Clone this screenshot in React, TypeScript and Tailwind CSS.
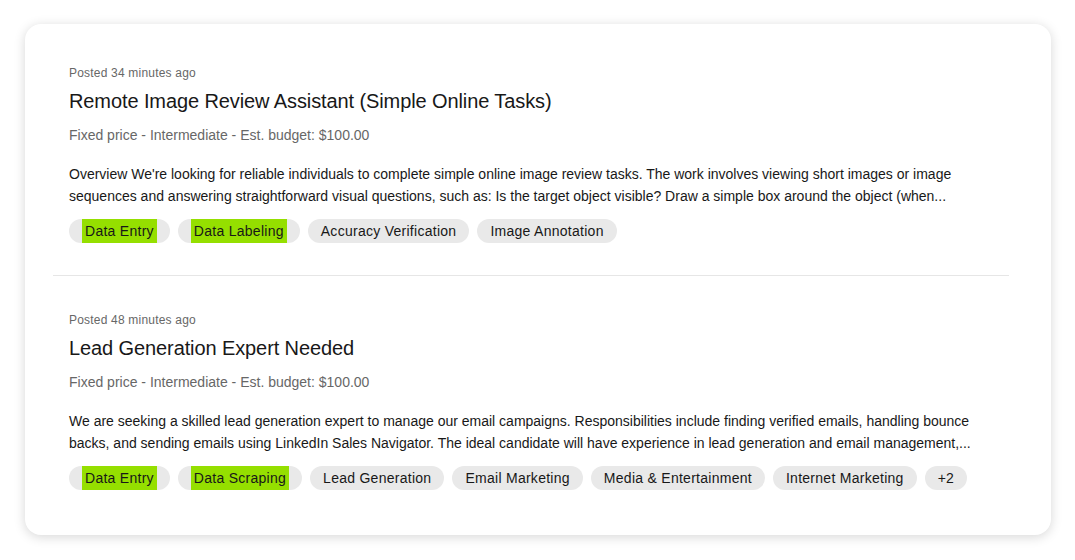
import React from "react";

type Skill = { label: string; hl?: boolean };
type Job = {
  posted: string;
  title: string;
  meta: string;
  desc: string[];
  skills: Skill[];
};

const jobs: Job[] = [
  {
    posted: "Posted 34 minutes ago",
    title: "Remote Image Review Assistant (Simple Online Tasks)",
    meta: "Fixed price - Intermediate - Est. budget: $100.00",
    desc: [
      "Overview We're looking for reliable individuals to complete simple online image review tasks. The work involves viewing short images or image",
      "sequences and answering straightforward visual questions, such as: Is the target object visible? Draw a simple box around the object (when...",
    ],
    skills: [
      { label: "Data Entry", hl: true },
      { label: "Data Labeling", hl: true },
      { label: "Accuracy Verification" },
      { label: "Image Annotation" },
    ],
  },
  {
    posted: "Posted 48 minutes ago",
    title: "Lead Generation Expert Needed",
    meta: "Fixed price - Intermediate - Est. budget: $100.00",
    desc: [
      "We are seeking a skilled lead generation expert to manage our email campaigns. Responsibilities include finding verified emails, handling bounce",
      "backs, and sending emails using LinkedIn Sales Navigator. The ideal candidate will have experience in lead generation and email management,...",
    ],
    skills: [
      { label: "Data Entry", hl: true },
      { label: "Data Scraping", hl: true },
      { label: "Lead Generation" },
      { label: "Email Marketing" },
      { label: "Media & Entertainment" },
      { label: "Internet Marketing" },
      { label: "+2" },
    ],
  },
];

function JobItem({ job, first }: { job: Job; first: boolean }) {
  return (
    <div className={first ? "" : "border-t border-[#e6e6e6]"}>
      <div className="px-4 pt-9 pb-8">
        <div className="text-[12px] leading-4 tracking-[0.2px] text-[#676767]">{job.posted}</div>
        <div className="mt-[6px] text-[20px] leading-7 tracking-[-0.1px] text-[#181818]">{job.title}</div>
        <div className="mt-[10px] text-[14px] leading-5 text-[#676767]">{job.meta}</div>
        <div className="mt-[18px] text-[14px] leading-[22px] text-[#181818]">
          {job.desc.map((l, i) => (
            <div key={i} className="whitespace-nowrap">{l}</div>
          ))}
        </div>
        <div className="mt-3 flex gap-2">
          {job.skills.map((s, i) => (
            <span
              key={i}
              className="flex h-6 items-center rounded-full bg-[#e9e9e9] px-[13px] text-[14px] tracking-[0.27px] text-[#181818]"
            >
              {s.hl ? (
                <span className="flex h-6 items-center bg-[#95df00] px-[3px]">{s.label}</span>
              ) : (
                s.label
              )}
            </span>
          ))}
        </div>
      </div>
    </div>
  );
}

export default function App() {
  return (
    <div
      className="min-h-[560px] w-[1075px] bg-white pl-[25px] pt-[24px]"
      style={{ fontFamily: '"Liberation Sans", Arial, sans-serif' }}
    >
      <div className="h-[511px] w-[1026px] rounded-2xl bg-white pb-[14px] pl-[28px] pr-[42px] pt-[5px] shadow-[0_2px_12px_rgba(0,0,0,0.16)]">
        {jobs.map((j, i) => (
          <JobItem key={i} job={j} first={i === 0} />
        ))}
      </div>
    </div>
  );
}
